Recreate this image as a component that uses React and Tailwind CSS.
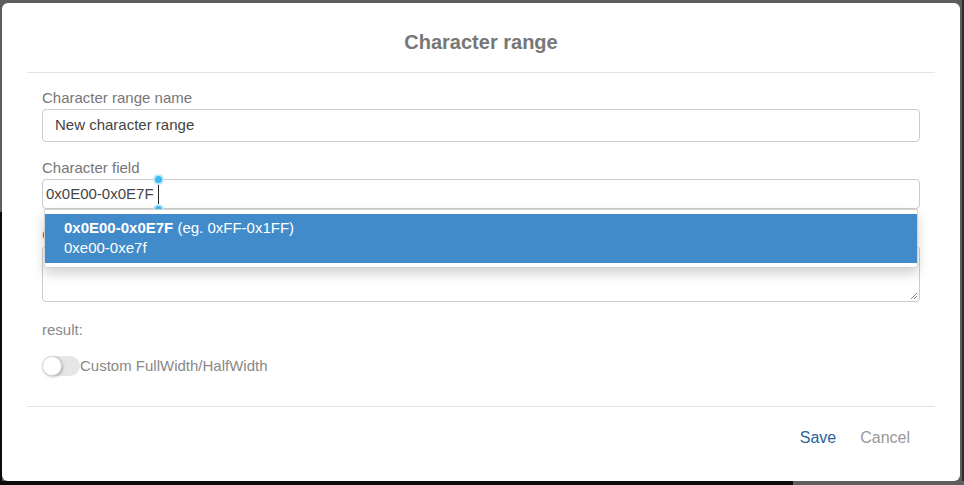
import React from 'react';

const font = { fontFamily: '"Liberation Sans", Arial, sans-serif' };

const Toggle = () => (
    <div className="relative h-[20px] w-[38px] rounded-full bg-[#e6e6e6] shrink-0">
        <div className="absolute left-0 top-0 h-[20px] w-[20px] rounded-full bg-white border border-[#d6d6d6] shadow-[1px_1px_3px_rgba(0,0,0,0.25)]" />
    </div>
);

const SelectionHandle = ({ className }) => (
    <span className={`absolute h-[7px] w-[7px] rounded-full bg-[#3dbbf0] ring-2 ring-[#bfe9fb] ${className}`} />
);

const App = () => {
    return (
        <div className="w-[964px] h-[485px] bg-[#5e5e5e] flex flex-col overflow-hidden" style={font}>
            <div className="flex flex-1">
                <div className="w-[2px] flex flex-col">
                    <div className="h-[212px] bg-[#5e5e5e]" />
                    <div className="flex-1 bg-[#0b0b0b]" />
                </div>
                <div className="mt-[3px] w-[958px] h-[478px] rounded-[6px] bg-white flex flex-col">
                    <div className="h-[69px] flex items-center justify-center">
                        <h2 className="text-[20px] font-bold text-[#777] pt-[9px]">Character range</h2>
                    </div>
                    <div className="mx-[25px] border-t border-[#e5e5e5]" />

                    <div className="px-[40px] pt-[15px] flex flex-col">
                        <label className="text-[15px] leading-[20px] text-[#777]">Character range name</label>
                        <div className="mt-[1px] h-[33px] rounded-[4px] border border-[#cccccc] flex items-center px-[12px] text-[15px] text-[#444]">
                            New character range
                        </div>

                        <label className="mt-[16px] text-[15px] leading-[20px] text-[#777]">Character field</label>
                        <div className="relative mt-[1px]">
                            <div className="h-[30px] rounded-[4px] border border-[#cccccc] flex items-center pl-[3px] text-[15px] text-[#444]">
                                <span>0x0E00-0x0E7F</span>
                                <span className="ml-[4px] h-[20px] w-px bg-[#222]" />
                            </div>
                            <SelectionHandle className="left-[113px] -top-[3px]" />
                            <SelectionHandle className="left-[113px] top-[27px]" />

                            <div className="absolute left-[2px] right-[2px] top-[30px] z-10 bg-white border border-[#d4d4d4] rounded-b-[3px] py-[4px] shadow-[0_6px_12px_rgba(0,0,0,0.175)]">
                                <div className="bg-[#428bca] text-white text-[15px] leading-[20px] pl-[19px] pt-[4px] pb-[5px]">
                                    <div>
                                        <span className="font-bold">0x0E00-0x0E7F</span> (eg. 0xFF-0x1FF)
                                    </div>
                                    <div>0xe00-0xe7f</div>
                                </div>
                            </div>
                        </div>

                        <label className="mt-[16px] text-[15px] leading-[20px] text-[#777]">C</label>
                        <div className="relative mt-[1px] h-[56px] rounded-[4px] border border-[#cccccc]">
                            <svg className="absolute right-[1px] bottom-[1px]" width="9" height="9" viewBox="0 0 9 9">
                                <path d="M8 2L2 8M8 5L5 8" stroke="#888" strokeWidth="1" />
                            </svg>
                        </div>

                        <div className="mt-[18px] text-[15px] leading-[20px] text-[#888]">result:</div>

                        <div className="mt-[15px] flex items-center">
                            <Toggle />
                            <span className="text-[15px] text-[#888] leading-[20px] pt-[1px]">Custom FullWidth/HalfWidth</span>
                        </div>
                    </div>

                    <div className="mt-[30px] mx-[25px] border-t border-[#e5e5e5]" />

                    <div className="flex justify-end items-center gap-[24px] pr-[50px] pt-[20px] text-[16px] leading-[22px]">
                        <button className="text-[#2a6496]">Save</button>
                        <button className="text-[#999]">Cancel</button>
                    </div>
                </div>
                <div className="flex-1 flex">
                    <div className="flex-1 bg-[#5e5e5e]" />
                    <div className="w-[2px] bg-[#2e2e2e]" />
                </div>
            </div>
            <div className="h-[4px] flex">
                <div className="w-[793px] bg-[#0b0b0b]" />
                <div className="flex-1 bg-[#5e5e5e]" />
            </div>
        </div>
    );
};

export default App;
